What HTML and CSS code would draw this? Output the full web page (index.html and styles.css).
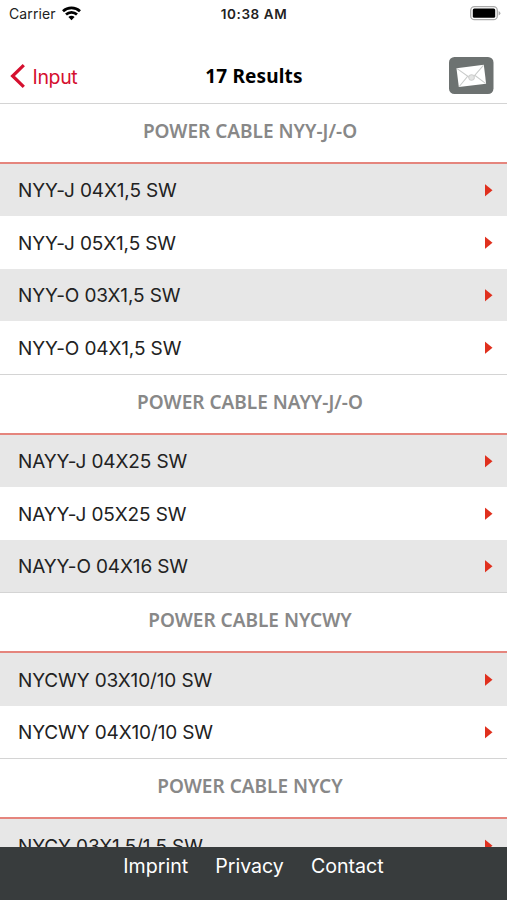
FILE: index.html
```html
<!DOCTYPE html>
<html lang="en">
<head>
<meta charset="utf-8">
<title>17 Results</title>
<link rel="stylesheet" href="styles.css">
</head>
<body>
<div class="app">
  <header class="top">
    <div class="status">
      <div class="carrier"><span>Carrier</span>
        <svg class="wifi" width="19" height="15" viewBox="0 0 19 15" fill="none" stroke="#000" stroke-width="2.7"><path d="M1 5.3C5.7.8 13.3.8 18 5.3M4 8.6c3.1-2.9 7.9-2.9 11 0"/><path d="M9.5 14.2 6.4 11c1.8-1.6 4.4-1.6 6.2 0z" fill="#000" stroke="none"/></svg>
      </div>
      <div class="time">10:38 AM</div>
      <svg class="battery" width="31" height="15" viewBox="0 0 31 15"><rect x=".7" y=".7" width="26.6" height="13" rx="3.8" fill="#fff" stroke="#aaa" stroke-width="1.3"/><rect x="2.8" y="2.6" width="22.4" height="9.2" rx="1.5"/><path d="M28.6 5v4.5q1.8-.7 1.8-2.2T28.6 5z" fill="#aaa"/></svg>
    </div>
    <nav class="navbar">
      <a class="back"><svg width="15" height="24" viewBox="0 0 15 24" fill="none" stroke="#d5102f" stroke-width="3.2"><path d="M13.8 1.2 2.6 12l11.2 10.8"/></svg><span>Input</span></a>
      <h1 class="title">17 Results</h1>
      <a class="mail"><svg width="45" height="37" viewBox="0 0 45 37"><rect width="44.5" height="37" rx="5.5" fill="#6d7271"/><g transform="rotate(-7 22 18.5)"><rect x="8.5" y="9.5" width="27.5" height="19" fill="#fff"/><path d="M9 10 20 20q2.300 1.800 4.500 0L35.500 10M9 28l9.500-9M35.500 28l-9.500-9" fill="none" stroke="#c9cbca" stroke-width="1"/><circle cx="22.300" cy="20.500" r="2.800" fill="#e4e5e4" stroke="#cfd0cf"/></g></svg></a>
    </nav>
  </header>
  <main class="results">
    <section>
      <h2>POWER CABLE NYY-J/-O</h2>
      <ul>
        <li><span>NYY-J 04X1,5 SW</span><i></i></li>
        <li><span>NYY-J 05X1,5 SW</span><i></i></li>
        <li><span>NYY-O 03X1,5 SW</span><i></i></li>
        <li><span>NYY-O 04X1,5 SW</span><i></i></li>
      </ul>
    </section>
    <section>
      <h2>POWER CABLE NAYY-J/-O</h2>
      <ul>
        <li><span>NAYY-J 04X25 SW</span><i></i></li>
        <li><span>NAYY-J 05X25 SW</span><i></i></li>
        <li><span>NAYY-O 04X16 SW</span><i></i></li>
      </ul>
    </section>
    <section>
      <h2>POWER CABLE NYCWY</h2>
      <ul>
        <li><span>NYCWY 03X10/10 SW</span><i></i></li>
        <li><span>NYCWY 04X10/10 SW</span><i></i></li>
      </ul>
    </section>
    <section>
      <h2>POWER CABLE NYCY</h2>
      <ul>
        <li><span>NYCY 03X1,5/1,5 SW</span><i></i></li>
      </ul>
    </section>
  </main>
  <footer class="footer"><a>Imprint</a><a>Privacy</a><a>Contact</a></footer>
</div>
</body>
</html>
```

FILE: styles.css
```css
* { box-sizing: border-box; }
body { margin: 0; background: #fff; font-family: Inter, "Liberation Sans", sans-serif; color: #222; }
.app { height: 900px; display: flex; flex-direction: column; overflow: hidden; }
.top { flex: none; height: 102.6px; }
.status { height: 28px; display: grid; grid-template-columns: 1fr auto 1fr; align-items: center; padding: 0 6px 1px 9px; }
.carrier { display: flex; align-items: center; gap: 6px; font-size: 14px; letter-spacing: 0.1px; }
.wifi { margin-top: -1px; }
.time { font-size: 13.5px; font-weight: 600; letter-spacing: 0.6px; margin-right: 2px; }
.battery { justify-self: end; margin-top: -1px; }
.navbar { height: 75px; display: grid; grid-template-columns: 1fr auto 1fr; align-items: center; padding: 20px 13px 0 10px; }
.back { display: flex; align-items: center; gap: 7.5px; color: #d5102f; font-size: 19.5px; letter-spacing: -0.35px; }
.back span { padding-top: 2px; }
.title { margin: 0 0 0 4px; font: 700 19px/26px "Noto Sans", sans-serif; letter-spacing: 0.15px; color: #000; }
.mail { justify-self: end; height: 37px; margin-top: -1px; }
.mail svg { display: block; }
.results { flex: 1; min-height: 0; overflow: hidden; }
h2 { margin: 0; height: 61px; padding: 0 7px 3.5px 0; display: flex; align-items: center; justify-content: center; border-top: 1px solid #d4d4d4; border-bottom: 2px solid #e5857d; font: 600 19px/26px "Noto Sans", sans-serif; color: #888; }
ul { list-style: none; margin: 0; padding: 0; }
li { height: 52.5px; display: flex; align-items: center; justify-content: space-between; padding: 1.6px 14.5px 0 18px; font-size: 19px; letter-spacing: -0.13px; }
li:nth-child(odd) { background: #e7e7e7; }
li i { width: 8px; height: 13px; margin-top: -1px; background: #e0301e; clip-path: polygon(0 0, 100% 50%, 0 100%); }
.footer { flex: none; height: 53px; display: flex; justify-content: center; gap: 27px; padding-top: 7px; background: #383c3d; color: #fff; font-size: 19.6px; line-height: 24px; }
```
